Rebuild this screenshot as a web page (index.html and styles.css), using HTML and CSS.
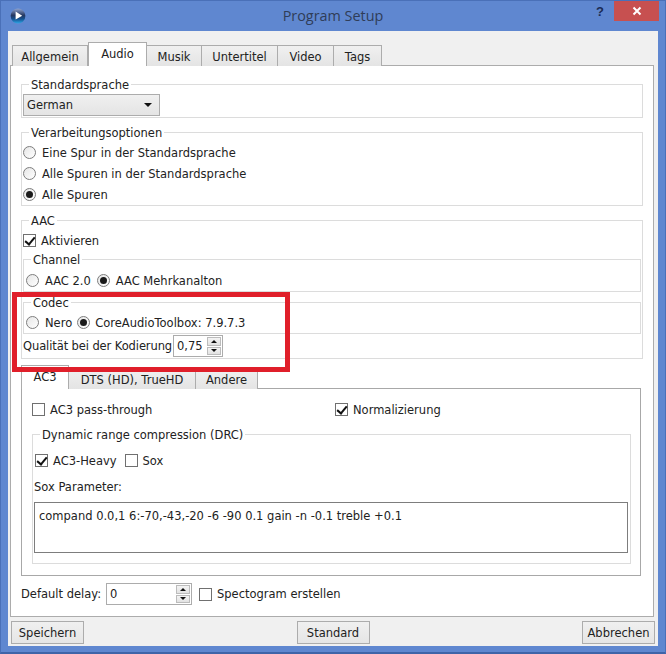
FILE: index.html
```html
<!DOCTYPE html>
<html lang="de">
<head>
<meta charset="utf-8">
<title>Program Setup</title>
<link rel="stylesheet" href="styles.css">
</head>
<body>
<div class="window">
  <header class="titlebar">
    <svg class="app-icon" width="16" height="16" viewBox="0 0 16 16">
      <defs>
        <linearGradient id="orb" x1="0" y1="0" x2="0" y2="1">
          <stop offset="0" stop-color="#8fa3cf"/>
          <stop offset="0.45" stop-color="#24365f"/>
          <stop offset="0.7" stop-color="#14508f"/>
          <stop offset="1" stop-color="#2fa6e6"/>
        </linearGradient>
      </defs>
      <circle cx="8" cy="8" r="7.4" fill="url(#orb)"/>
      <path d="M5.6 3.6 L12.2 7.8 L5.6 11.6 Z" fill="#fff"/>
    </svg>
    <span class="title">Program Setup</span>
    <span class="help">?</span>
    <span class="close">
      <svg width="10" height="10" viewBox="0 0 10 10"><path d="M1.5 1.5 L8.5 8.5 M8.5 1.5 L1.5 8.5" stroke="#fff" stroke-width="2"/></svg>
    </span>
  </header>

  <main class="client">
    <nav class="tabs tabs-main">
      <span class="tab">Allgemein</span>
      <span class="tab active">Audio</span>
      <span class="tab">Musik</span>
      <span class="tab">Untertitel</span>
      <span class="tab">Video</span>
      <span class="tab">Tags</span>
    </nav>

    <section class="pane">
      <div class="group group-lang">
        <span class="legend">Standardsprache</span>
        <div class="combo"><span>German</span><i class="combo-arrow"></i></div>
      </div>

      <div class="group group-proc">
        <span class="legend">Verarbeitungsoptionen</span>
        <label class="row"><i class="radio"></i>Eine Spur in der Standardsprache</label>
        <label class="row"><i class="radio"></i>Alle Spuren in der Standardsprache</label>
        <label class="row"><i class="radio on"></i>Alle Spuren</label>
      </div>

      <div class="group group-aac">
        <span class="legend">AAC</span>
        <label class="row row-activate"><i class="check on"></i>Aktivieren</label>
        <div class="group group-channel">
          <span class="legend">Channel</span>
          <div class="row row-inline">
            <label class="opt"><i class="radio"></i>AAC 2.0</label>
            <label class="opt"><i class="radio on"></i>AAC Mehrkanalton</label>
          </div>
        </div>
        <div class="group group-codec">
          <span class="legend">Codec</span>
          <div class="row row-inline">
            <label class="opt"><i class="radio"></i>Nero</label>
            <label class="opt"><i class="radio on"></i>CoreAudioToolbox: 7.9.7.3</label>
          </div>
        </div>
        <div class="quality">
          <span class="quality-label">Qualität bei der Kodierung</span>
          <div class="spin spin-quality">
            <span class="spin-value">0,75</span>
            <span class="spin-btns"><i class="up"></i><i class="down"></i></span>
          </div>
        </div>
      </div>

      <nav class="tabs tabs-inner">
        <span class="tab active">AC3</span>
        <span class="tab">DTS (HD), TrueHD</span>
        <span class="tab">Andere</span>
      </nav>

      <section class="subpane">
        <div class="two-col">
          <label class="row"><i class="check"></i>AC3 pass-through</label>
          <label class="row"><i class="check on"></i>Normalizierung</label>
        </div>
        <div class="group group-drc">
          <span class="legend">Dynamic range compression (DRC)</span>
          <div class="row row-inline row-drc">
            <label class="opt"><i class="check on"></i>AC3-Heavy</label>
            <label class="opt"><i class="check"></i>Sox</label>
          </div>
          <div class="row sox-label">Sox Parameter:</div>
          <div class="textbox">compand 0.0,1 6:-70,-43,-20 -6 -90 0.1 gain -n -0.1 treble +0.1</div>
        </div>
      </section>

      <div class="delay">
        <span>Default delay:</span>
        <div class="spin spin-delay">
          <span class="spin-value">0</span>
          <span class="spin-btns"><i class="up"></i><i class="down"></i></span>
        </div>
        <label class="opt"><i class="check"></i>Spectogram erstellen</label>
      </div>
    </section>

    <footer class="buttons">
      <button class="btn">Speichern</button>
      <button class="btn">Standard</button>
      <button class="btn">Abbrechen</button>
    </footer>
  </main>

  <div class="highlight"></div>
</div>
</body>
</html>
```

FILE: styles.css
```css
* { box-sizing: border-box; }
html, body { margin: 0; padding: 0; }
body {
  width: 666px;
  height: 654px;
  overflow: hidden;
  background: #5f87d0;
  font-family: "DejaVu Sans", sans-serif;
  font-size: 11.5px;
  color: #222;
}
.window {
  position: relative;
  width: 666px;
  height: 654px;
  background: #5f87d0;
  border-top: 1px solid #4a70b8;
  border-left: 1px solid #4a70b8;
  border-right: 1px solid #4a70b8;
  border-bottom: 2px solid #3f64a8;
}
.titlebar {
  position: relative;
  height: 30px;
}
.app-icon { position: absolute; left: 9px; top: 7px; }
.title {
  display: block;
  text-align: center;
  font-family: "Open Sans", sans-serif;
  font-size: 14.4px;
  line-height: 30px;
  color: #2f3d58;
}
.help {
  position: absolute;
  left: 595px;
  top: 2px;
  font: bold 13px/18px "Liberation Sans", sans-serif;
  color: #1c2c54;
}
.close {
  position: absolute;
  left: 613px;
  top: 0;
  width: 45px;
  height: 20px;
  background: #c75050;
  display: flex;
  align-items: center;
  justify-content: center;
}
.client {
  margin: 0 7px;
  height: 615px;
  background: #f0f0f0;
  padding: 11px 4px 0 2px;
}
.tabs {
  position: relative;
  z-index: 1;
  display: grid;
  height: 24px;
  margin-bottom: -1px;
}
.tabs-main {
  margin-left: 2px;
  grid-template-columns: 76px 59px 55px 76px 56px 48px;
  width: 370px;
}
.tabs-inner {
  margin-top: 6px;
  grid-template-columns: 48px 127px 62px;
  width: 237px;
}
.tab {
  height: 21px;
  margin-top: 3px;
  border: 1px solid #acacac;
  border-bottom: 0;
  border-left-width: 0;
  background: linear-gradient(#f0f0f0, #e4e4e4);
  text-align: center;
  line-height: 22px;
}
.tab:first-child { border-left-width: 1px; }
.tab.active {
  height: 24px;
  margin-top: 0;
  background: #fff;
  border-left-width: 1px;
  line-height: 22px;
}
.tab.active + .tab { border-left-width: 0; }
.pane {
  background: #fff;
  border: 1px solid #acacac;
  height: 552px;
  padding: 18px 10px 0;
}
.group {
  position: relative;
  border: 1px solid #dcdcdc;
}
.legend {
  position: absolute;
  top: -8px;
  left: 7px;
  padding: 0 2px;
  background: #fff;
  line-height: 16px;
}
.row {
  display: flex;
  align-items: center;
  height: 21px;
  white-space: nowrap;
}
.row-inline { gap: 6px; }
.opt {
  display: inline-flex;
  align-items: center;
  white-space: nowrap;
}
.radio, .check {
  display: inline-block;
  flex: none;
  width: 13px;
  height: 13px;
  margin-right: 5px;
  background: #fff;
  position: relative;
}
.radio {
  border-radius: 50%;
  border: 1px solid #7d7d7d;
  margin-left: 1px;
  margin-right: 6px;
  background: linear-gradient(135deg, #e6e6e6, #fff);
}
.radio.on::after {
  content: "";
  position: absolute;
  left: 2px;
  top: 2px;
  width: 7px;
  height: 7px;
  border-radius: 50%;
  background: #1a1a1a;
}
.check { border: 1px solid #707070; }
.check.on::after {
  content: "";
  position: absolute;
  left: 3px;
  top: 0;
  width: 4px;
  height: 8px;
  border: solid #111;
  border-width: 0 2px 2px 0;
  transform: rotate(40deg);
}
.group-lang { height: 34px; padding: 9px 1px 0 1px; }
.combo {
  display: flex;
  align-items: center;
  justify-content: space-between;
  width: 137px;
  height: 22px;
  padding: 0 7px 0 3px;
  border: 1px solid #acacac;
  background: linear-gradient(#f0f0f0, #e4e4e4);
}
.combo-arrow {
  width: 0;
  height: 0;
  border: 4px solid transparent;
  border-top: 4px solid #111;
  border-bottom: 0;
}
.group-proc { margin-top: 14px; height: 74px; padding-top: 9px; }
.group-aac { margin-top: 14px; height: 139px; padding: 9px 1px 0 1px; }
.row-activate { height: 21px; }
.group-channel { margin-top: 8px; height: 33px; padding: 10px 0 0 1px; }
.group-codec { margin-top: 10px; height: 32px; padding: 9px 0 0 1px; }
.group-channel .row-inline { gap: 5px; }
.group-codec .row-inline { gap: 4px; }
.group-codec .radio.on { margin-right: 5px; }
.quality {
  display: flex;
  align-items: center;
  margin-top: 1px;
  height: 22px;
  white-space: nowrap;
}
.quality-label { width: 150px; flex: none; letter-spacing: -0.1px; }
.spin {
  display: flex;
  align-items: stretch;
  height: 22px;
  border: 1px solid #acacac;
  background: #fff;
}
.spin-value { flex: 1; padding-left: 3px; line-height: 21px; }
.spin-quality { width: 50px; }
.spin-delay { width: 86px; }
.spin-btns {
  display: flex;
  flex-direction: column;
  gap: 1px;
  width: 15px;
  padding: 1px 1px 1px 0;
}
.spin-btns i {
  flex: 1;
  display: flex;
  align-items: center;
  justify-content: center;
  border: 1px solid #bcbcbc;
  background: linear-gradient(#f4f4f4, #e2e2e2);
}
.spin-btns i::after {
  content: "";
  border: 3px solid transparent;
}
.spin-btns .up::after { border-top: 0; border-bottom: 3px solid #111; }
.spin-btns .down::after { border-bottom: 0; border-top: 3px solid #111; }
.subpane {
  border: 1px solid #a8a8a8;
  margin-right: 2px;
  height: 188px;
  padding: 10px 9px 0 10px;
}
.two-col {
  display: grid;
  grid-template-columns: 303px 1fr;
}
.group-drc { margin-top: 14px; height: 130px; padding: 15px 2px 0 1px; }
.row-drc { padding-left: 1px; gap: 8px; }
.sox-label { margin-top: 5px; }
.textbox {
  margin-top: 5px;
  height: 51px;
  border: 1px solid #7d7d7d;
  padding: 6px 4px;
  line-height: 15px;
  white-space: nowrap;
}
.delay {
  display: flex;
  align-items: center;
  margin-top: 7px;
  height: 22px;
}
.delay > span { width: 85px; white-space: nowrap; }
.delay .opt { margin-left: 7px; }
.buttons {
  display: flex;
  justify-content: space-between;
  margin-right: -2px;
  padding: 4px 1px 0 1px;
}
.btn {
  width: 73px;
  height: 23px;
  padding: 0;
  border: 1px solid #acacac;
  background: linear-gradient(#f0f0f0, #e5e5e5);
  font: inherit;
  color: inherit;
}
.highlight {
  position: absolute;
  z-index: 2;
  left: 11px;
  top: 291px;
  width: 278px;
  height: 80px;
  border: 5px solid #e01f2a;
  pointer-events: none;
}
```
